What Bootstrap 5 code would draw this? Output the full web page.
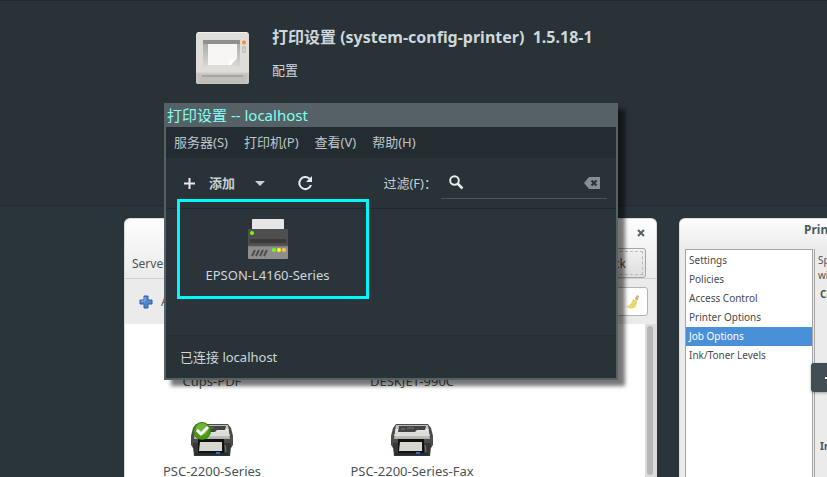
<!DOCTYPE html>
<html lang="zh-CN">
<head>
<meta charset="utf-8">
<meta name="viewport" content="width=device-width, initial-scale=1">
<title>打印设置</title>
<link href="https://cdn.jsdelivr.net/npm/bootstrap@5.3.0/dist/css/bootstrap.min.css" rel="stylesheet">
<style>
body{background:#283237;color:#ced7db;font:13px/20px "Noto Sans","Noto Sans CJK SC",sans-serif;height:100vh;overflow:hidden}
button{font:inherit;color:inherit;background:none;border:0;padding:0}
svg{display:block;flex:none}
.app-head{height:205px;padding:26px 0 0 192px;border-top:1px solid #1f292e;flex:none}
.app-head h1{font-size:16px;line-height:20px;font-weight:700;margin:0 0 13px;white-space:pre}
.app-text{margin-left:20px}
.gallery{background:#2a353b;border-top:1px solid #212b30;padding:12px 0 0 124px;gap:22px;min-height:0}
.shot{background:#ebebeb;color:#4c5356;border:1px solid #d8dadb;border-bottom:0;border-radius:6px 6px 0 0;overflow:hidden}
.shot-a{width:533px;font-size:12px;flex:none}
.shot-b{min-width:0;font-size:10px}
.shot-top{background:linear-gradient(#fdfdfd,#ebebeb);flex:none}
.shot-a .shot-top{height:60px;border-bottom:1px solid #cfcfcf;padding:0 10px 0 7px}
.close{width:10px;height:10px;margin:10px 0 10px}
.back{width:100px;height:30px;border:1px solid #a5a5a5;border-radius:3px;background:linear-gradient(#f2f2f2,#dedede);padding:2px}
.back span{display:block;border:1px dashed #bbb;height:24px;padding-right:16px;text-align:right;line-height:23px}
.shot-tools{height:45px;padding:0 8px 0 14px;gap:8px;flex:none}
.find{width:150px;height:29px;border:1px solid #b4b4b4;border-radius:3px;background:#fff;padding-right:7px}
.find input{min-width:0;border:0;outline:0;background:none;flex:1}
.queues{background:#fff;grid-template-columns:174px 226px;padding-top:47px;align-content:start;row-gap:30px;font-size:13px}
.queue{gap:2px;white-space:nowrap}
.track{width:11px;background:#dcdcdc;padding:2px}
.thumb{width:6px;height:149px;border-radius:3px;background:#b5b6b7}
.shot-b .shot-top{height:30px;padding:3px 0 0 124px;font-size:12px;font-weight:700;line-height:16px;color:#4b5a60;white-space:nowrap}
.tabs{width:128px;border:1px solid #a5a5a5;border-bottom:0;background:#fff;margin-left:5px;padding-top:1px;flex:none}
.tabs a{display:block;height:19px;line-height:19px;padding-left:3px;color:#454b4e;text-decoration:none}
.tabs a.active{background:#4a90d9;color:#fff}
.pane{border-left:1px solid #a5a5a5;margin-left:1px;padding:4px 3px;line-height:15px;white-space:nowrap;overflow:hidden}
.pane h2{font-size:10px;line-height:15px;font-weight:700;margin:4px 2px 137px}
.next{right:0;top:363px;width:16px;height:29px;background:#434e54;border-radius:3px 0 0 3px;box-shadow:0 1px 3px #0005;z-index:2;overflow:hidden;padding-left:13px}
.dialog{left:164px;top:103px;width:454px;border:2px solid #566165;border-top:0;background:#283237;box-shadow:7px 6px 4px #0008;z-index:3}
.title{background:#566165;color:#80fff0;font-size:15px;line-height:24px;margin:0;padding-left:1px;font-weight:400}
.menu{background:#232d31;height:31px;padding:0 0 2px 8px;gap:16px;color:#bcc5c9}
.tools{height:50px;padding:0 9px 0 18px;color:#c7d0d4;white-space:nowrap}
.add{gap:14px}
.filter{width:166px;height:32px;border-bottom:1px solid #4b565b;padding:0 7px 0 8px;margin-left:4px}
.filter input{min-width:0;flex:1;border:0;outline:0;background:none;color:inherit}
.view{border-top:1px solid #20292d;height:127px;position:relative;background:#2a343a}
.printer{width:127px;margin-left:38px;padding-top:10px;white-space:nowrap}
.printer span{margin-top:6px}
.mark-box{left:11px;top:-10px;width:192px;height:100px;border:3px solid #00f7fb;pointer-events:none}
.status{height:43px;padding:11px 14px 0;border-top:1px solid #242e32}
</style>
<script src="https://cdn.jsdelivr.net/npm/bootstrap@5.3.0/dist/js/bootstrap.bundle.min.js"></script>
</head>
<body class="d-flex flex-column">
<svg width="0" height="0" class="position-absolute" aria-hidden="true">
<defs>
<linearGradient id="steel" x1="0" y1="0" x2="0" y2="1"><stop offset="0" stop-color="#b9bab5"/><stop offset=".5" stop-color="#e2e2de"/><stop offset="1" stop-color="#aaaba6"/></linearGradient>
<g id="laser">
<path d="M5 3h32l3 4 2 8v9l-2 3H2l-2-3v-9L2 7z" fill="#4a4d4a"/>
<path d="M5 4h32l2 14H3z" fill="url(#steel)"/>
<path d="M4 9h34M3 14h36" stroke="#f0f0ed"/>
<path d="M8 5h27l-1 4H26l-2 2H7z" fill="#424542"/><path d="M10 8h4m2-1h7" stroke="#777a77"/>
<path d="M2 22h38v4l-1 9H3l-1-9z" fill="#343735"/>
<path d="M7 18h26v16H7z" fill="#111"/><path d="M9 21h22v9H8z" fill="#d5d6cf"/>
<path d="M4 32h33v2H4z" fill="#222b31"/><path d="M25 31h4v2h-4z" fill="#356cc0"/><path d="M34 24l1 7" stroke="#777"/>
</g>
</defs>
</svg>

<header class="app-head d-flex align-items-start">
<svg width="60" height="60" viewBox="0 0 60 60" aria-hidden="true">
<defs><linearGradient id="well" x1="0" y1="0" x2="0" y2="1"><stop offset="0" stop-color="#a5a5a3"/><stop offset="1" stop-color="#dddcd8"/></linearGradient></defs>
<rect x="4" y="5" width="53" height="52" rx="3" fill="#deddda"/><path d="M6 5.500h49" stroke="#f2f1ef"/>
<path d="M4 46h53v9q0 2-2 2H6q-2 0-2-2z" fill="#c6c5c1"/><path d="M4 46h53" stroke="#d0cfcb"/><path d="M7 48h47v8H7z" fill="#c0bfbb"/><path d="M10 49h41" stroke="#a6a5a1" stroke-width="2"/>
<path d="M11 13h37v28l-5-3H16l-5 4z" fill="url(#well)"/><path d="M11 13h37v4H11z" fill="#8f8f8d"/>
<path d="M16 17h29v21H16z" fill="#f7f6f4"/><path d="M37 38q0-6 2-6l6-1-6 7z" fill="#fff"/><path d="M39 38l6-7v7z" fill="#d4d3cf"/>
<circle cx="52" cy="15.500" r="2" fill="#ff8b2e"/><rect x="50" y="19" width="4" height="7" rx="1" fill="#c4c3c0"/><path d="M51 23h2" stroke="#eee"/>
</svg>
<div class="app-text text-nowrap"><h1>打印设置 (system-config-printer)  1.5.18-1</h1><div>配置</div></div>
</header>

<main class="gallery d-flex flex-grow-1">
<section class="shot shot-a d-flex flex-column">
<div class="shot-top d-flex justify-content-between align-items-end">
<span class="mb-1">Server</span>
<div class="d-flex flex-column align-items-end">
<button class="close" aria-label="Close"><svg width="10" height="10" viewBox="0 0 10 10"><path d="M2 2l6 6M8 2L2 8" stroke="#536168" stroke-width="2"/></svg></button>
<button class="back"><span>Back</span></button>
</div>
</div>
<div class="shot-tools d-flex align-items-center">
<svg width="14" height="14" viewBox="0 0 14 14"><path d="M5 1h4v4h4v4H9v4H5V9H1V5h4z" fill="#5287c9" stroke="#2f5e9f" stroke-linejoin="round"/><path d="M6 2v4H2" stroke="#8db5e3" fill="none"/></svg>
<button>Add</button>
<label class="find d-flex align-items-center ms-auto"><input type="text" aria-label="Filter">
<svg width="14" height="16" viewBox="0 0 14 16"><path d="M9 4l2-3 2 1-1 4-2 1z" fill="#d8ae82"/><path d="M7 5l4 3-1 5-5 2-5-2q5-2 7-8z" fill="#f0df72"/><path d="M7 6l4 3M3 13l4-4M6 14l3-5" stroke="#dcc960" fill="none"/></svg></label>
</div>
<div class="d-flex flex-grow-1">
<div class="queues d-grid flex-grow-1">
<div class="queue d-flex flex-column align-items-center"><span>Cups-PDF</span></div>
<div class="queue d-flex flex-column align-items-center"><span>DESKJET-990C</span></div>
<div class="queue d-flex flex-column align-items-center"><svg width="42" height="38" viewBox="0 0 42 38"><use href="#laser"/><circle cx="11" cy="10" r="8.500" fill="#4c9a16" stroke="#37770f"/><circle cx="11" cy="8" r="6" fill="#70b33a"/><path d="M6 9l4 4 7-7" fill="none" stroke="#fff" stroke-width="3"/></svg><span>PSC-2200-Series</span></div>
<div class="queue d-flex flex-column align-items-center"><svg width="42" height="38" viewBox="0 0 42 38"><use href="#laser"/></svg><span>PSC-2200-Series-Fax</span></div>
</div>
<div class="track"><div class="thumb"></div></div>
</div>
</section>
<section class="shot shot-b d-flex flex-column flex-grow-1 border-end-0 rounded-end-0">
<div class="shot-top">Printer Properties</div>
<div class="d-flex flex-grow-1">
<nav class="tabs"><a href="#">Settings</a><a href="#">Policies</a><a href="#">Access Control</a><a href="#">Printer Options</a><a href="#" class="active">Job Options</a><a href="#">Ink/Toner Levels</a></nav>
<div class="pane">Specify the default job options<br>will be added<h2>Common Options</h2><h2 class="mb-0">Image Options</h2></div>
</div>
</section>
</main>

<button class="next position-absolute" aria-label="Next"><svg width="12" height="12" viewBox="0 0 12 12"><path d="M1 6h10M7 2l4 4-4 4" fill="none" stroke="#fff" stroke-width="2"/></svg></button>

<section class="dialog position-absolute">
<h2 class="title">打印设置 -- localhost</h2>
<nav class="menu d-flex align-items-center"><button>服务器(S)</button><button>打印机(P)</button><button>查看(V)</button><button>帮助(H)</button></nav>
<div class="tools d-flex align-items-center">
<button class="add d-flex align-items-center fw-bold"><svg width="11" height="11" viewBox="0 0 11 11"><path d="M5.500 0v11M0 5.500h11" stroke="#e7eaeb" stroke-width="2"/></svg><span>添加</span></button>
<button class="ms-3 me-4" aria-label="更多"><svg class="ms-1" width="10" height="5" viewBox="0 0 10 5"><path d="M0 0h10L5 5z" fill="#c7d0d4"/></svg></button>
<button class="ms-2" aria-label="刷新"><svg width="16" height="16" viewBox="0 0 16 16"><path d="M12.500 3.800A6 6 0 1 0 14 10" fill="none" stroke="#e7eaeb" stroke-width="2"/><path d="M15 1v6H9z" fill="#e7eaeb"/></svg></button>
<label for="filter" class="ms-auto">过滤(F)：</label>
<div class="filter d-flex align-items-center">
<svg width="15" height="15" viewBox="0 0 15 15"><circle cx="5.500" cy="5.500" r="4.300" fill="none" stroke="#e7eaeb" stroke-width="2"/><path d="M8.500 8.500l5 5" stroke="#e7eaeb" stroke-width="2.500"/></svg>
<input id="filter" type="text">
<button aria-label="清除"><svg width="16" height="12" viewBox="0 0 16 12"><path d="M5 0h11v12H5L0 6z" fill="#868e92"/><path d="M7.500 3.500l5 5M12.500 3.500l-5 5" stroke="#283237" stroke-width="2"/></svg></button>
</div>
</div>
<div class="view">
<div class="printer d-flex flex-column align-items-center">
<svg width="40" height="40" viewBox="0 0 40 40"><path d="M4 12V1q0-1 1-1h30q1 0 1 1v11z" fill="#e6e6e6"/><rect y="10" width="40" height="18" rx="1" fill="#4f4f4f"/><path d="M2 20h36v4H2z" fill="#3a3a3a"/><path d="M0 27h40v12q0 1-1 1H1q-1 0-1-1z" fill="#8e8e8e"/><path d="M0 27h40" stroke="#666"/><circle cx="4" cy="14" r="2" fill="#7f0"/><path d="M4 37l3-6m1 6l3-6m1 6l3-6m1 6l3-6" stroke="#4d4d4d" stroke-width="2"/><circle cx="26" cy="31" r="2" fill="#7f0"/><circle cx="31" cy="31" r="2" fill="#ff0"/><circle cx="36" cy="31" r="2" fill="#ffc54a"/></svg>
<span>EPSON-L4160-Series</span>
</div>
<div class="mark-box position-absolute"></div>
</div>
<div class="status">已连接 localhost</div>
</section>
</body>
</html>
